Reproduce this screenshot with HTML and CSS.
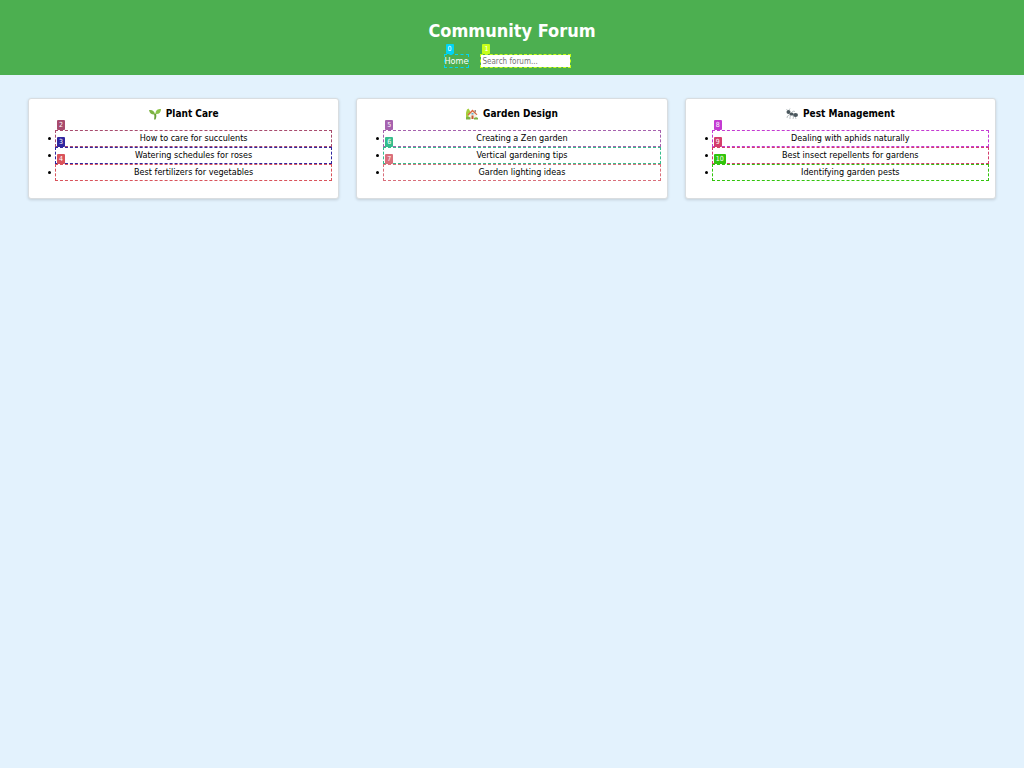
FILE: index.html
```
<!DOCTYPE html>
<html lang="en">
<head>
<meta charset="utf-8">
<title>Community Forum</title>
<link rel="stylesheet" href="styles.css">
</head>
<body>
<header class="header">
  <h1 class="title">Community Forum</h1>
  <nav class="nav">
    <a class="mark home cyan" href="#">Home<span class="tag">0</span></a>
    <label class="mark search lime"><input class="field" type="search" placeholder="Search forum..." aria-label="Search forum"><span class="tag">1</span></label>
  </nav>
</header>
<main class="grid">
  <section class="card">
    <h2 class="heading"><svg class="icon" viewBox="0 0 24 24" aria-hidden="true"><path d="M10 23c1-4 1-8 0-11l4-1c1 4 1 8-1 12z" fill="#689f38"/><path d="M12 13C6 14 1 11 0 4c7-1 11 2 12 9z" fill="#7cb342"/><path d="M13 12c0-8 4-10 11-10 0 7-4 11-11 10z" fill="#8bc34a"/></svg>Plant Care</h2>
    <ul class="list">
      <li><div class="mark plum">How to care for succulents<span class="tag">2</span></div></li>
      <li><div class="mark navy">Watering schedules for roses<span class="tag">3</span></div></li>
      <li><div class="mark coral">Best fertilizers for vegetables<span class="tag">4</span></div></li>
    </ul>
  </section>
  <section class="card">
    <h2 class="heading"><svg class="icon" viewBox="0 0 24 24" aria-hidden="true"><path d="M0 22V9l2-6 3-2 3 5v16z" fill="#a5cf3c"/><path d="M5 12l8-7 8 7v10H5z" fill="#f4efe6"/><path d="M3 13L13 3l10 10-2 1-8-7-8 8z" fill="#d9653b"/><path d="M17 4h3v6l-3-3z" fill="#a1887f"/><path d="M11 15h4v7h-4z" fill="#c65b32"/><path d="M11 10h4v3h-4z" fill="#64a8c8"/><path d="M0 19c2-2 6-2 9 0v4H0zM16 20c3-2 6-2 8 0v3h-8z" fill="#7cb342"/></svg>Garden Design</h2>
    <ul class="list">
      <li><div class="mark violet">Creating a Zen garden<span class="tag">5</span></div></li>
      <li><div class="mark green">Vertical gardening tips<span class="tag">6</span></div></li>
      <li><div class="mark rose">Garden lighting ideas<span class="tag">7</span></div></li>
    </ul>
  </section>
  <section class="card">
    <h2 class="heading"><svg class="icon" viewBox="0 0 24 24" aria-hidden="true"><g fill="#4b575d"><ellipse cx="5" cy="8" rx="4" ry="4"/><ellipse cx="11" cy="12" rx="4" ry="3"/><ellipse cx="19" cy="14" rx="5" ry="4"/></g><path d="M3 5L1 2M6 4l2-3M8 13l-5 3-1 4M10 14l-2 4v4M13 14l2 4-1 4M14 14l5 5 1 3M11 10l3-4 4 1" fill="none" stroke="#7b878c" stroke-width="1"/></svg>Pest Management</h2>
    <ul class="list">
      <li><div class="mark magenta">Dealing with aphids naturally<span class="tag">8</span></div></li>
      <li><div class="mark crimson">Best insect repellents for gardens<span class="tag">9</span></div></li>
      <li><div class="mark leaf">Identifying garden pests<span class="tag">10</span></div></li>
    </ul>
  </section>
</main>
</body>
</html>
```
FILE: styles.css
```
* { box-sizing: border-box; }
body {
  margin: 0;
  background: #e3f2fd;
  color: #000;
  font-family: "DejaVu Sans Condensed", "DejaVu Sans", sans-serif;
  font-size: 9px;
  text-align: center;
}
.header {
  padding: 20px 12px 7px;
  background: #4caf50;
  color: #fff;
}
.title {
  margin: 0;
  font-size: 18px;
  line-height: 22px;
}
.nav {
  display: flex;
  justify-content: center;
  align-items: center;
  gap: 11px;
  margin-top: 12px;
  padding-right: 9px;
}
.mark {
  position: relative;
  border: 1px dashed var(--c);
}
.tag {
  position: absolute;
  left: 1px;
  top: -11px;
  padding: 0 2px;
  border-radius: 1px;
  background: var(--c);
  color: #fff;
  font-size: 7px;
  line-height: 10px;
}
.home {
  color: #fff;
  text-decoration: none;
  line-height: 12px;
}
.search { display: flex; }
.field {
  width: 89px;
  height: 12px;
  margin: 0;
  padding: 0 1px;
  border: 0;
  background: #fff;
  font-family: inherit;
  font-size: 8px;
}
.field::placeholder { color: #757575; }
.grid {
  display: grid;
  grid-template-columns: repeat(3, 1fr);
  gap: 17px;
  padding: 23px 28px;
}
.card {
  padding: 7px 6px 17px 26px;
  border: 1px solid #d9dde0;
  border-radius: 3px;
  background: #fff;
  box-shadow: 0 1px 3px rgba(0, 0, 0, 0.15);
}
.heading {
  display: flex;
  justify-content: center;
  align-items: center;
  gap: 5px;
  margin: 0 0 0 -20px;
  font-size: 10px;
  line-height: 16px;
}
.icon {
  width: 12px;
  height: 12px;
}
.list {
  margin: 8px 0 0;
  padding: 0 0 0 5px;
}
.list .mark {
  margin-left: -5px;
  line-height: 15px;
}
.cyan { --c: #00d4f5; }
.lime { --c: #c6ff1a; }
.plum { --c: #a84b6e; }
.navy { --c: #3026a0; }
.coral { --c: #d9535b; }
.violet { --c: #a662ae; }
.green { --c: #35bd8c; }
.rose { --c: #d96f7b; }
.magenta { --c: #c43bd2; }
.crimson { --c: #d33d6c; }
.leaf { --c: #31c40c; }
```
